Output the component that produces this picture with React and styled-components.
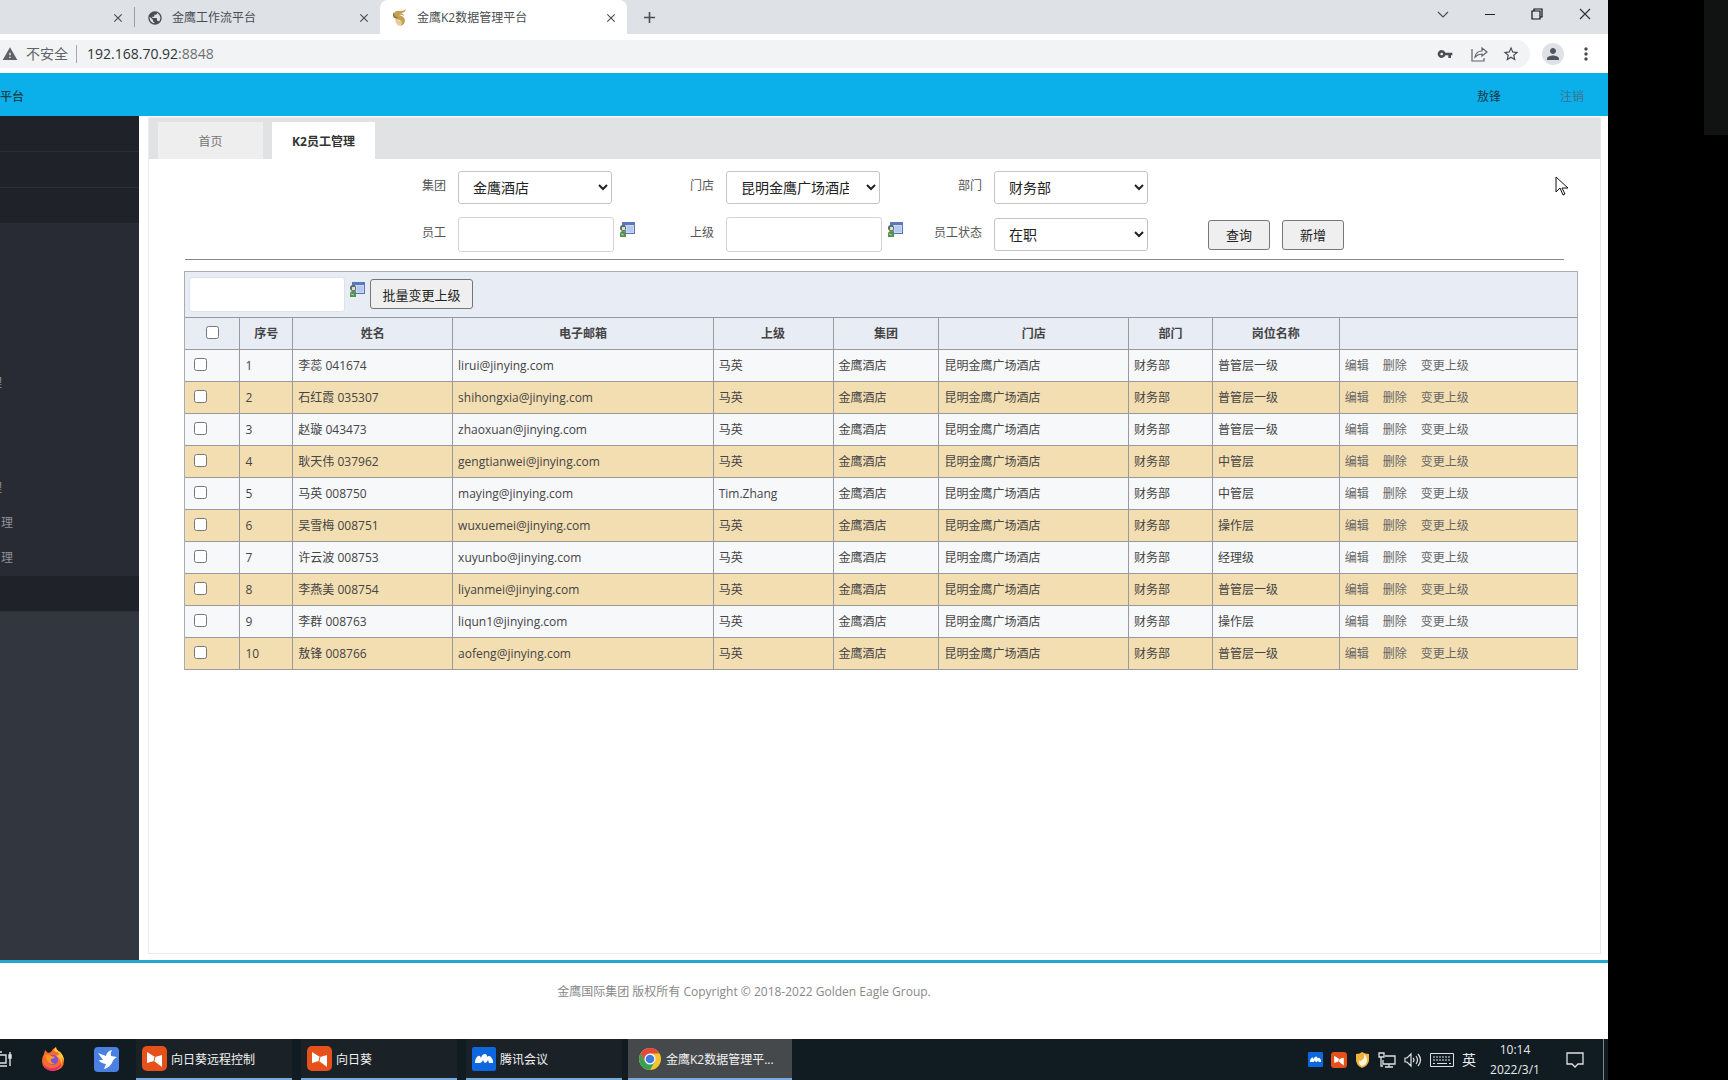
import React from "react";
import styled, { createGlobalStyle, css } from "styled-components";
import {
  MdAdd,
  MdClose,
  MdMoreVert,
  MdPerson,
  MdPublic,
  MdStarBorder,
  MdVpnKey,
  MdWarning,
} from "react-icons/md";

const GlobalStyle = createGlobalStyle`
  * {
    box-sizing: border-box;
  }
  body {
    margin: 0;
    background: #000;
    color: #444;
    font: 12px/18px "Open Sans", "Noto Sans CJK SC", sans-serif;
  }
  button, input, select {
    font-family: inherit;
  }
  button {
    padding: 0;
  }
  a {
    color: inherit;
    text-decoration: none;
  }
`;

const Desktop = styled.div`
  min-height: 100vh;
  display: flex;
  position: relative;
`;
const Screen = styled.div`
  flex: 1;
  min-width: 0;
  display: flex;
  flex-direction: column;
  background: #fff;
  overflow: hidden;
`;
const SideStrip = styled.aside`
  width: 120px;
  display: flex;
  justify-content: flex-end;
  background: #000;
`;
const SidePanel = styled.div`
  width: 24px;
  height: 135px;
  background: #101312;
`;
const Cursor = styled.svg`
  position: absolute;
  top: 176px;
  right: 159px;
`;

/* browser */
const TabStrip = styled.div`
  height: 34px;
  display: flex;
  align-items: stretch;
  background: #dee1e6;
  color: #4a4d51;
`;
const BrowserTab = styled.div`
  width: ${(props) => props.width};
  display: flex;
  align-items: center;
  gap: 9px;
  padding: 2px 9px 0 12px;

  ${(props) => props.$active && css`
    background: #fff;
    border-radius: 8px 8px 0 0;
  `}
  ${(props) => props.$divider && css`
    border-right: 1px solid #9b9ea3;
    height: 20px;
    align-self: center;
  `}
`;
const TabTitle = styled.span`
  flex: 1;
  white-space: nowrap;
`;
const IconButton = styled.button`
  display: flex;
  align-items: center;
  justify-content: center;
  width: ${(props) => props.width || "14px"};
  border: 0;
  background: none;
  color: ${(props) => props.color || "#4a4d51"};
`;
const WindowControls = styled.div`
  margin-left: auto;
  display: flex;
  height: 28px;
`;
const AddressRow = styled.div`
  height: 39px;
  padding: 6px 0 5px;
  display: flex;
  align-items: center;
`;
const AddressBar = styled.div`
  flex: 1;
  height: 28px;
  display: flex;
  align-items: center;
  padding: 0 4px 0 2px;
  background: #f1f3f4;
  border-radius: 0 14px 14px 0;
  font-size: 14px;
  color: #5f6368;
`;
const Insecure = styled.span`
  padding: 0 8px;
  border-right: 1px solid #a5a8ac;
  line-height: 18px;
`;
const Url = styled.span`
  flex: 1;
  padding-left: 10px;
  color: #6c7075;
  b {
    font-weight: 400;
    color: #303336;
  }
`;
const Avatar = styled.span`
  width: 22px;
  height: 22px;
  margin: 0 12px;
  display: flex;
  align-items: center;
  justify-content: center;
  border-radius: 50%;
  background: #dee1e6;
  color: #4f555c;
`;
const AddressEnd = styled.span`
  width: 12px;
`;

/* page */
const Header = styled.header`
  height: 43px;
  display: flex;
  align-items: center;
  justify-content: space-between;
  padding: 4px 24px 0 0;
  background: #0bb0ea;
  color: #17404f;
`;
const Brand = styled.div`
  width: 24px;
  display: flex;
  justify-content: flex-end;
  overflow: hidden;
  white-space: nowrap;
  font-weight: 500;
`;
const UserLinks = styled.div`
  display: flex;
  gap: 59px;
  a:last-child {
    color: #3a7590;
  }
`;
const Body = styled.div`
  flex: 1;
  display: flex;
`;
const Sidebar = styled.nav`
  width: 139px;
  background: #32373f;
`;
const Group = styled.div`
  height: 36px;
  background: #1f2229;
  border-bottom: 1px solid #2b2f36;
`;
const SubMenu = styled.div`
  padding: 1px 0;
  background: #282b33;
  color: #8e9196;
`;
const SubItem = styled.a`
  height: 35px;
  width: ${(props) => props.$visible}px;
  display: flex;
  align-items: center;
  justify-content: flex-end;
  overflow: hidden;
`;
const Frame = styled.main`
  flex: 1;
  min-width: 0;
  margin: 1px 7px 6px 9px;
  border: 1px solid #ebebeb;
`;
const PageTabs = styled.div`
  height: 41px;
  display: flex;
  align-items: flex-end;
  gap: 9px;
  padding-left: 9px;
  background: #e0e2e3;
`;
const PageTab = styled.button`
  height: 37px;
  width: ${(props) => (props.$active ? 103 : 105)}px;
  border: 0;
  background: ${(props) => (props.$active ? "#fff" : "#eee")};
  color: ${(props) => (props.$active ? "#333" : "#777")};
  font-size: 12px;
  font-weight: ${(props) => (props.$active ? 700 : 400)};
`;
const Filters = styled.form`
  display: grid;
  grid-template-columns: 297fr 184px 60px 184px 60px 184px 410fr;
  grid-template-rows: 33px 35px;
  gap: 13px 12px;
  align-items: center;
  margin: 12px 0 7px;
`;
const Label = styled.label`
  padding-bottom: 3px;
  text-align: right;
  color: #555;
  white-space: nowrap;
`;
const Select = styled.select`
  width: 154px;
  height: 33px;
  padding: 0 14px 0 10px;
  border: 1px solid #c4c4c4;
  border-radius: 3px;
  background: #fff;
  color: #222;
  font-size: 14px;
`;
const Field = styled.div`
  display: flex;
  align-items: flex-start;
  gap: 5px;
`;
const TextInput = styled.input`
  width: 156px;
  height: 35px;
  padding: 0 10px;
  border: 1px solid #d4d4d4;
  border-radius: 3px;
  background: #fff;
`;
const PickButton = styled.button`
  width: 17px;
  height: 17px;
  margin-top: 4px;
  border: 0;
  background: none;
  svg {
    display: block;
  }
`;
const Actions = styled.div`
  grid-column: 7;
  display: flex;
  gap: 12px;
  padding-left: 18px;
`;
const Button = styled.button`
  min-width: 62px;
  height: 30px;
  padding: 0 10px;
  border: 1px solid #777;
  border-radius: 3px;
  background: #efefef;
  color: #222;
  font-size: 13px;
  white-space: nowrap;
`;
const Rule = styled.hr`
  height: 1px;
  margin: 0 36px 11px;
  border: 0;
  background: #888;
`;
const Panel = styled.section`
  margin: 0 22px 0 35px;
  border: 1px solid #a9adb3;
  border-bottom: 0;
`;
const PanelBar = styled.div`
  height: 45px;
  display: flex;
  align-items: flex-start;
  padding: 5px 4px;
  gap: 4px;
  background: #e8ecf4;

  ${TextInput} {
    border-color: #dfe2e6;
  }
  ${Button} {
    margin-top: 2px;
    min-width: 103px;
  }
`;
const Table = styled.table`
  width: 100%;
  table-layout: fixed;
  border-collapse: collapse;
  border-style: hidden;
`;
const cell = css`
  padding: 2px 5px 0;
  border: 1px solid #989a9e;
  white-space: nowrap;
`;
const Th = styled.th`
  ${cell}
  height: 31px;
  background: #e8ecf4;
  font-weight: 700;
`;
const Td = styled.td`
  ${cell}
  height: 32px;
`;
const Row = styled.tr`
  background: #f7f8fa;
  &:nth-child(even) {
    background: #f3deb2;
  }
`;
const CheckBox = styled.input`
  width: 13px;
  height: 13px;
  margin: 0 0 4px;
  display: inline-block;
  vertical-align: middle;
  ${Td} & {
    margin-left: 4px;
  }
`;
const RowLinks = styled.div`
  display: flex;
  gap: 14px;
  color: #666;
`;
const TableEnd = styled.div`
  height: 1px;
  background: #989a9e;
`;
const Footer = styled.footer`
  height: 79px;
  padding: 20px 120px 0 0;
  border-top: 3px solid #23a6cf;
  text-align: center;
  color: #888;
`;

/* taskbar */
const Taskbar = styled.div`
  height: 41px;
  display: flex;
  align-items: stretch;
  background: #111b22;
  color: #e8eaec;
`;
const Launchers = styled.div`
  width: 136px;
  display: flex;
  align-items: center;
  gap: 29px;
  padding-bottom: 1px;
`;
const Task = styled.button`
  width: ${(props) => (props.$active ? 164 : 156)}px;
  margin-right: ${(props) => props.$gap || 0}px;
  display: flex;
  align-items: center;
  gap: 4px;
  padding: 0 0 0 ${(props) => (props.$active ? 10 : 6)}px;
  border: 0;
  border-bottom: 2px solid #76a9dc;
  background: ${(props) => (props.$active ? "#45494b" : "#1b2227")};
  color: #f2f2f2;
  font-size: 12px;
  white-space: nowrap;
`;
const Tray = styled.div`
  margin-left: auto;
  display: flex;
  align-items: center;
  gap: 8px;
`;
const Ime = styled.span`
  font-size: 14px;
`;
const Clock = styled.div`
  width: 62px;
  margin-right: 12px;
  text-align: center;
  line-height: 20px;
`;
const ShowDesktop = styled.div`
  align-self: stretch;
  width: 5px;
  margin-left: 11px;
  border-left: 1px solid #7d8388;
`;

const Picker = () => (
  <svg width="17" height="17" viewBox="0 0 17 17">
    <path d="M3 1h13v12H6z" fill="#5773b4" />
    <path d="M3 1h13v3H3z" fill="#5b78bd" />
    <path d="M6 4h9v8H7z" fill="#c8d9f3" />
    <path d="M8 6h6M8 8h6M8 10h6" stroke="#a3bae2" />
    <circle cx="4" cy="7" r="3" fill="#596d60" />
    <path d="M3 6h3v3H3z" fill="#d8dfd0" />
    <path d="M1 16v-3q0-3 3-3t3 3v3z" fill="#55934d" />
    <path d="M2 13l3 1" stroke="#a9d49d" />
  </svg>
);

const GoldBird = () => (
  <svg width="16" height="18" viewBox="0 0 16 18">
    <path d="M2 4q2-3 6-2 4 0 6-2-1 4-5 4 3 1 3 3-3-2-5-1 5 1 6 5 0 5-5 6 3-4 0-6-4 0-6-3-1-2 0-4z" fill="#c4a052" />
    <path d="M3 9q3 3 6 3 1 3-2 5-4-3-4-8z" fill="#e6ca96" />
    <path d="M2 3q-1 5 5 6-6 1-6-3 0-2 1-3z" fill="#8b6d2f" />
  </svg>
);

const Share = () => (
  <svg width="17" height="16" viewBox="0 0 17 16" fill="none" stroke="#5f6368" strokeWidth="1.2">
    <path d="M1 3v12h12v-3" />
    <path d="M4 11q1-6 7-6V2l5 4-5 4V8q-4 0-7 3z" />
  </svg>
);

const Sunflower = ({ size }) => (
  <svg width={size} height={size} viewBox="0 0 25 25">
    <rect width="25" height="25" rx="5" fill="#e6501b" />
    <path d="M5 6l8 5 7-2v12l-8-6-7 2z" fill="#fff" />
    <path d="M13 11l-1 4" stroke="#e6501b" />
  </svg>
);

const Meeting = ({ size }) => (
  <svg width={size} height={size} viewBox="0 0 24 24">
    <rect width="24" height="24" rx="2" fill="#0d68e0" />
    <path d="M3 16q0-5 3-7 2-1 3 2 1-4 4-4 2 0 2 3 2-2 4 0 2 2 2 6h-4l-1-3q-1 3-3 3-1 0-2-3-1 3-3 3z" fill="#fff" />
  </svg>
);

const TaskView = () => (
  <svg width="12" height="16" viewBox="0 0 12 16" fill="none" stroke="#dfe2e4" strokeWidth="1.4">
    <path d="M0 4h6v8H0M0 1h2M0 15h7M10 1v3M10 7v8" />
    <path d="M9 4h2v3H9z" fill="#dfe2e4" />
  </svg>
);

const Firefox = () => (
  <svg width="24" height="24" viewBox="0 0 24 24">
    <path d="M3 7l1-4 3 3 3-1q1-3 5-5 0 3 4 5 4 4 4 9 0 9-11 10Q1 23 1 14q0-4 2-7z" fill="#ff6a2b" />
    <path d="M15 0q0 3 4 5 4 4 4 9-1-3-3-4-1-5-7-6 0-2 2-4z" fill="#ffd43a" />
    <path d="M19 7q4 6 1 11 0-7-5-9z" fill="#ffc23a" />
    <path d="M2 16q3 6 10 5 7-1 8-6 0 8-8 9Q4 24 2 16z" fill="#e8306f" />
    <circle cx="12" cy="13" r="5" fill="#8150d8" />
    <path d="M4 8q4-1 6 1l4 1q-1 2-4 2-1 4 4 5-6 1-8-4-1-3-2-5z" fill="#ff9727" />
  </svg>
);

const BlueBird = () => (
  <svg width="25" height="25" viewBox="0 0 25 25">
    <rect width="25" height="25" rx="4" fill="#4a80e2" />
    <path d="M4 6l8 3q1-5 6-6-2 3-1 6l6 1q-4 2-5 6-3 5-8 6l2-5q-6-1-7-4h4z" fill="#fff" />
  </svg>
);

const Chrome = () => (
  <svg width="24" height="24" viewBox="0 0 24 24">
    <circle cx="12" cy="12" r="11" fill="#f6c52c" />
    <path d="M2.5 6.5A11 11 0 0 1 21.5 6.5H12L7.2 14.7z" fill="#e24a3b" />
    <path d="M2.5 6.5A11 11 0 0 0 12 23l4.8-8.2L7.2 14.7z" fill="#38a055" />
    <circle cx="12" cy="12" r="5.5" fill="#fff" />
    <circle cx="12" cy="12" r="4.3" fill="#3d7be2" />
  </svg>
);

const Shield = () => (
  <svg width="15" height="16" viewBox="0 0 15 16">
    <path d="M1 2q4 0 6-2 3 2 7 2v6q0 5-7 8-6-3-6-8z" fill="#eeb33b" />
    <path d="M9 2q1 4-2 6-2 2-3 0-1 5 3 6 5-1 5-6 0-4-3-6z" fill="#fff4dc" />
  </svg>
);

const Network = () => (
  <svg width="18" height="16" viewBox="0 0 18 16" fill="none" stroke="#dfe2e4" strokeWidth="1.3">
    <path d="M7 4h10v8H5V8M11 12v3M7 15h8M1 1h5v4H1zM3 5v9h2" />
  </svg>
);

const Sound = () => (
  <svg width="18" height="16" viewBox="0 0 18 16" fill="none" stroke="#dfe2e4" strokeWidth="1.2">
    <path d="M1 6h2l4-4v12l-4-4H1zM9 6q2 2 0 4M12 4q3 4 0 8M14 2q5 6 0 12" />
  </svg>
);

const Keyboard = () => (
  <svg width="24" height="14" viewBox="0 0 24 14" fill="none" stroke="#dfe2e4">
    <path d="M.5.5h23v13H.5z" />
    <path d="M3 4h18M3 7h18" strokeDasharray="2 1" />
    <path d="M3 10.5h2M7 10.5h10M19 10.5h2" />
  </svg>
);

const Notice = () => (
  <svg width="18" height="18" viewBox="0 0 18 18" fill="none" stroke="#dfe2e4" strokeWidth="1.3">
    <path d="M1 2h16v11h-5l-3 3-3-3H1z" />
  </svg>
);

const columns = [
  { title: "", width: 55 },
  { title: "序号", width: 53 },
  { title: "姓名", width: 160 },
  { title: "电子邮箱", width: 261 },
  { title: "上级", width: 120 },
  { title: "集团", width: 106 },
  { title: "门店", width: 190 },
  { title: "部门", width: 84 },
  { title: "岗位名称", width: 127 },
  { title: "", width: 238 },
];
const totalWidth = columns.reduce((sum, c) => sum + c.width, 0);

const staff = [
  ["李蕊 041674", "lirui", "马英", "普管层一级"],
  ["石红霞 035307", "shihongxia", "马英", "普管层一级"],
  ["赵璇 043473", "zhaoxuan", "马英", "普管层一级"],
  ["耿天伟 037962", "gengtianwei", "马英", "中管层"],
  ["马英 008750", "maying", "Tim.Zhang", "中管层"],
  ["吴雪梅 008751", "wuxuemei", "马英", "操作层"],
  ["许云波 008753", "xuyunbo", "马英", "经理级"],
  ["李燕美 008754", "liyanmei", "马英", "普管层一级"],
  ["李群 008763", "liqun1", "马英", "操作层"],
  ["敖锋 008766", "aofeng", "马英", "普管层一级"],
];

// visible pixels of each submenu label, the menu is scrolled to the left
const subItems = [0, 0, 0, 0, 2, 0, 0, 2, 13, 13];

const Browser = () => (
  <>
    <TabStrip>
      <BrowserTab width="135px" $divider>
        <TabTitle />
        <IconButton aria-label="关闭"><MdClose size={14} /></IconButton>
      </BrowserTab>
      <BrowserTab width="245px">
        <MdPublic size={16} />
        <TabTitle>金鹰工作流平台</TabTitle>
        <IconButton aria-label="关闭"><MdClose size={14} /></IconButton>
      </BrowserTab>
      <BrowserTab width="247px" $active>
        <GoldBird />
        <TabTitle>金鹰K2数据管理平台</TabTitle>
        <IconButton aria-label="关闭"><MdClose size={14} /></IconButton>
      </BrowserTab>
      <IconButton width="44px" aria-label="新标签页"><MdAdd size={19} /></IconButton>
      <WindowControls>
        <IconButton width="47px" aria-label="搜索标签页">
          <svg width="12" height="12" viewBox="0 0 12 12" fill="none" stroke="currentColor" strokeWidth="1.2"><path d="M1 4l5 5 5-5" /></svg>
        </IconButton>
        <IconButton width="47px" aria-label="最小化">
          <svg width="12" height="12" viewBox="0 0 12 12" stroke="#222"><path d="M1 6.5h10" /></svg>
        </IconButton>
        <IconButton width="48px" aria-label="还原">
          <svg width="12" height="12" viewBox="0 0 12 12" fill="none" stroke="#111" strokeWidth="1.2"><path d="M1 3h8v8H1zM3 3V1h8v8H9" /></svg>
        </IconButton>
        <IconButton width="47px" aria-label="关闭窗口">
          <svg width="12" height="12" viewBox="0 0 12 12" stroke="#333" strokeWidth="1.2"><path d="M1 1l10 10M11 1L1 11" /></svg>
        </IconButton>
      </WindowControls>
    </TabStrip>
    <AddressRow>
      <AddressBar>
        <MdWarning size={16} />
        <Insecure>不安全</Insecure>
        <Url><b>192.168.70.92</b>:8848</Url>
        <IconButton width="34px" aria-label="密码"><MdVpnKey size={16} /></IconButton>
        <IconButton width="34px" aria-label="分享"><Share /></IconButton>
        <IconButton width="30px" aria-label="收藏"><MdStarBorder size={18} /></IconButton>
      </AddressBar>
      <Avatar><MdPerson size={18} /></Avatar>
      <IconButton width="20px" aria-label="菜单"><MdMoreVert size={20} /></IconButton>
      <AddressEnd />
    </AddressRow>
  </>
);

const FilterForm = () => (
  <Filters>
    <Label htmlFor="group">集团</Label>
    <Select id="group"><option>金鹰酒店</option></Select>
    <Label htmlFor="store">门店</Label>
    <Select id="store"><option>昆明金鹰广场酒店</option></Select>
    <Label htmlFor="dept">部门</Label>
    <Select id="dept"><option>财务部</option></Select>
    <span />
    <Label htmlFor="employee">员工</Label>
    <Field>
      <TextInput id="employee" />
      <PickButton type="button" aria-label="选择员工"><Picker /></PickButton>
    </Field>
    <Label htmlFor="leader">上级</Label>
    <Field>
      <TextInput id="leader" />
      <PickButton type="button" aria-label="选择上级"><Picker /></PickButton>
    </Field>
    <Label htmlFor="state">员工状态</Label>
    <Select id="state"><option>在职</option></Select>
    <Actions>
      <Button type="button">查询</Button>
      <Button type="button">新增</Button>
    </Actions>
  </Filters>
);

const StaffTable = () => (
  <Panel>
    <PanelBar>
      <TextInput aria-label="新上级" />
      <PickButton type="button" aria-label="选择新上级"><Picker /></PickButton>
      <Button type="button">批量变更上级</Button>
    </PanelBar>
    <TableEnd />
    <Table>
      <colgroup>
        {columns.map((c, i) => (
          <col key={i} style={{ width: `${(c.width / totalWidth) * 100}%` }} />
        ))}
      </colgroup>
      <thead>
        <tr>
          {columns.map((c, i) => (
            <Th key={i}>
              {i === 0 ? <CheckBox type="checkbox" aria-label="全选" /> : c.title}
            </Th>
          ))}
        </tr>
      </thead>
      <tbody>
        {staff.map(([name, mail, leader, post], i) => (
          <Row key={mail}>
            <Td><CheckBox type="checkbox" aria-label={name} /></Td>
            <Td>{i + 1}</Td>
            <Td>{name}</Td>
            <Td>{mail}@jinying.com</Td>
            <Td>{leader}</Td>
            <Td>金鹰酒店</Td>
            <Td>昆明金鹰广场酒店</Td>
            <Td>财务部</Td>
            <Td>{post}</Td>
            <Td>
              <RowLinks>
                <a href="#edit">编辑</a>
                <a href="#remove">删除</a>
                <a href="#leader">变更上级</a>
              </RowLinks>
            </Td>
          </Row>
        ))}
      </tbody>
    </Table>
    <TableEnd />
  </Panel>
);

const App = () => (
  <Desktop>
    <GlobalStyle />
    <Screen>
      <Browser />
      <Header>
        <Brand>平台</Brand>
        <UserLinks>
          <a href="#user">敖锋</a>
          <a href="#logout">注销</a>
        </UserLinks>
      </Header>
      <Body>
        <Sidebar>
          <Group />
          <Group />
          <Group />
          <SubMenu>
            {subItems.map((visible, i) => (
              <SubItem key={i} href="#menu" $visible={visible}>
                {visible > 0 && "理"}
              </SubItem>
            ))}
          </SubMenu>
          <Group />
        </Sidebar>
        <Frame>
          <PageTabs>
            <PageTab>首页</PageTab>
            <PageTab $active>K2员工管理</PageTab>
          </PageTabs>
          <FilterForm />
          <Rule />
          <StaffTable />
        </Frame>
      </Body>
      <Footer>金鹰国际集团 版权所有 Copyright © 2018-2022 Golden Eagle Group.</Footer>
      <Taskbar>
        <Launchers>
          <TaskView />
          <Firefox />
          <BlueBird />
        </Launchers>
        <Task $gap={9}><Sunflower size={25} />向日葵远程控制</Task>
        <Task $gap={9}><Sunflower size={25} />向日葵</Task>
        <Task $gap={6}><Meeting size={24} />腾讯会议</Task>
        <Task $active><Chrome />金鹰K2数据管理平...</Task>
        <Tray>
          <Meeting size={15} />
          <Sunflower size={16} />
          <Shield />
          <Network />
          <Sound />
          <Keyboard />
          <Ime>英</Ime>
          <Clock>10:14<br />2022/3/1</Clock>
          <Notice />
          <ShowDesktop />
        </Tray>
      </Taskbar>
    </Screen>
    <SideStrip>
      <SidePanel />
    </SideStrip>
    <Cursor width="14" height="20" viewBox="0 0 14 20">
      <path d="M1 1v15l4-4 3 7 2-1-3-6h6z" fill="#fff" stroke="#111" />
    </Cursor>
  </Desktop>
);

export default App;
